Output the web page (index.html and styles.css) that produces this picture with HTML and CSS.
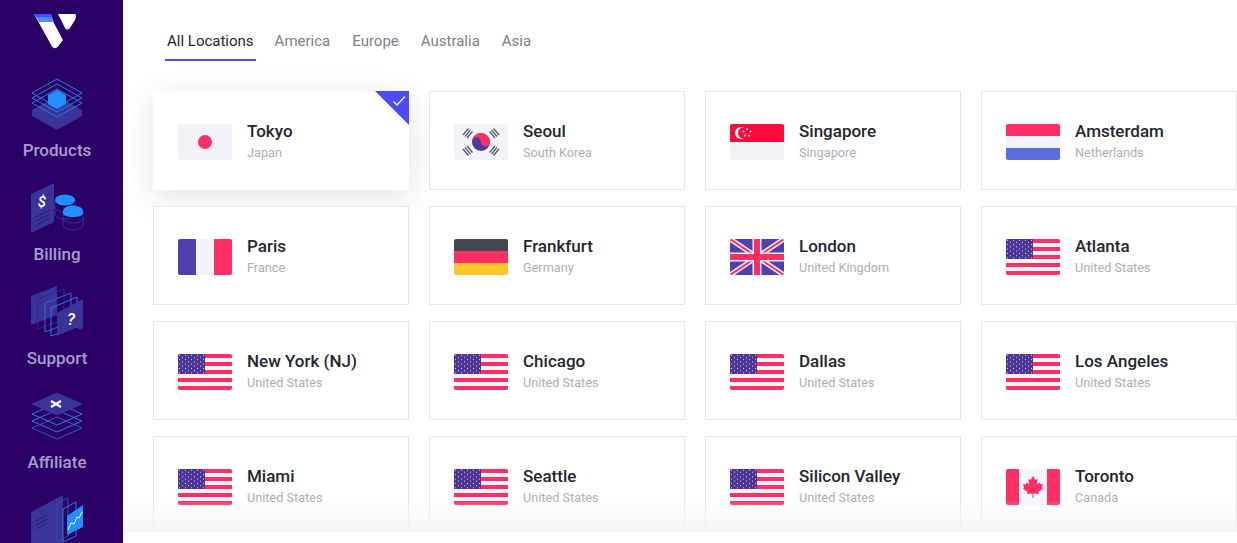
FILE: index.html
```html
<!DOCTYPE html>
<html lang="en">
<head>
<meta charset="utf-8">
<title>Locations</title>
<link rel="stylesheet" href="styles.css">
</head>
<body>
<svg class="defs" width="0" height="0" aria-hidden="true">
  <defs>
    <pattern id="stars" width="6" height="4.4" patternUnits="userSpaceOnUse">
      <circle cx="1.5" cy="1.2" r=".6" fill="#f2f3f8"/>
      <circle cx="4.5" cy="3.4" r=".6" fill="#f2f3f8"/>
    </pattern>
    <symbol id="us" viewBox="0 0 54 36">
      <rect width="54" height="36" fill="#f2f3f8"/>
      <path d="M0 0h54v4H0zM0 8h54v4H0zM0 16h54v4H0zM0 24h54v4H0zM0 32h54v4H0z" fill="#ff2e63"/>
      <rect width="27" height="20" fill="#4b3496"/>
      <rect width="27" height="20" fill="url(#stars)"/>
    </symbol>
  </defs>
</svg>
<div class="app">
  <nav class="sidebar">
    <svg class="logo" width="42" height="35" viewBox="0 0 42 35">
      <path d="M15 0H0L18 32.500Q21 36 24 32.500L29 26Z" fill="#fff"/>
      <path d="M0 0H17L20 8H5Z" fill="#4f8cff"/>
      <path d="M0 0H17L18 3H2Z" fill="#4a4aff"/>
      <path d="M24 0H41Q43 1 41 6L36 14Q33 17 31 14Z" fill="#fff"/>
    </svg>

    <a class="nav-item">
      <svg class="nav-icon" width="54" height="60" viewBox="0 0 54 60">
        <path d="M2 34L27 20L52 34V40L27 54L2 40Z" fill="#3a3399"/>
        <g fill="none" stroke="#2a7fdc" stroke-width="1" stroke-linejoin="round">
          <path d="M2 27L27 13L52 27L27 41Z"/>
          <path d="M2 22L27 8L52 22L27 36Z"/>
          <path d="M2 17L27 3L52 17L27 31Z"/>
        </g>
        <path d="M27 14L36 19V28L27 33L18 28V19Z" fill="#1e90ff"/>
      </svg>
      <span class="nav-label">Products</span>
    </a>

    <a class="nav-item">
      <svg class="nav-icon" width="54" height="60" viewBox="0 0 54 60">
        <path d="M1 14L24 3V42L1 53Z" fill="#3a3399"/>
        <text x="12" y="27" class="glyph">$</text>
        <path d="M6 37L20 30M6 41L20 34M6 45L20 38" stroke="#241a6e" stroke-width="1" fill="none"/>
        <g fill="none" stroke="#3a3399" stroke-width="1">
          <path d="M25 20V34C25 37 30 39 35 39S45 37 45 34V20"/>
          <path d="M25 27C25 30 30 32 35 32S45 30 45 27"/>
          <path d="M33 31V45C33 48 38 50 43 50S53 48 53 45V31"/>
          <path d="M33 38C33 41 38 43 43 43S53 41 53 38"/>
        </g>
        <ellipse cx="35" cy="20" rx="10" ry="5.500" fill="#1e90ff"/>
        <path d="M33 31A10 5.500 0 0 1 53 31V33C53 36 48 37 43 37S33 36 33 33Z" fill="#1e90ff"/>
      </svg>
      <span class="nav-label">Billing</span>
    </a>

    <a class="nav-item">
      <svg class="nav-icon" width="54" height="60" viewBox="0 0 54 60">
        <path d="M1 12L27 2V31L1 41Z" fill="#3a3399"/>
        <path d="M8 15L34 5V35L8 45Z" fill="none" stroke="#2c2b8f" stroke-width="1"/>
        <path d="M15 19L41 9V38L15 48Z" fill="none" stroke="#2a6fd0" stroke-width="1"/>
        <path d="M21 24L47 13V43L21 52Z" fill="none" stroke="#2a7fdc" stroke-width="1"/>
        <path d="M27 29L53 15V44L50 46L47 43L27 52Z" fill="#3a3399"/>
        <text x="41" y="41" class="glyph glyph-large">?</text>
      </svg>
      <span class="nav-label">Support</span>
    </a>

    <a class="nav-item">
      <svg class="nav-icon" width="54" height="60" viewBox="0 0 54 60">
        <g fill="none" stroke="#2a7fdc" stroke-width="1" stroke-linejoin="round">
          <path d="M2 40L27 29L52 40L27 51Z" stroke="#2560c0"/>
          <path d="M2 33L27 22L52 33L27 44Z"/>
          <path d="M2 26L27 15L52 26L27 37Z"/>
        </g>
        <path d="M2 16L27 5L52 16L27 27Z" fill="#3a3399" stroke="#3a3399" stroke-width="1" stroke-linejoin="round"/>
        <path d="M21 13L31 19M31 13L21 19" stroke="#fff" stroke-width="2.400" fill="none"/>
      </svg>
      <span class="nav-label">Affiliate</span>
    </a>

    <a class="nav-item">
      <svg class="nav-icon" width="54" height="60" viewBox="0 0 54 60">
        <path d="M1 20L33 3V60H1Z" fill="#3a3399"/>
        <path d="M6 29L17 23M6 33L17 27M6 37L17 31" stroke="#241a6e" stroke-width="1" fill="none"/>
        <path d="M27 12L38 6V44L27 50Z" fill="none" stroke="#2c4fb0" stroke-width="1"/>
        <path d="M33 17L46 10V44L33 50Z" fill="none" stroke="#2a7fdc" stroke-width="1"/>
        <path d="M37 24L53 13V35L37 43Z" fill="#1e90ff"/>
        <path d="M38 38L41 31L44 32L47 25L49 26L52 20" stroke="#fff" stroke-width="1" fill="none"/>
      </svg>
    </a>
  </nav>

  <main class="main">
    <ul class="tabs">
      <li class="tab tab-active">All Locations</li>
      <li class="tab">America</li>
      <li class="tab">Europe</li>
      <li class="tab">Australia</li>
      <li class="tab">Asia</li>
    </ul>

    <div class="grid">
      <div class="card card-active">
        <span class="corner">
          <svg width="14" height="12" viewBox="0 0 14 12"><path d="M1.500 6.500L5 10L13 1.500" fill="none" stroke="#fff" stroke-width="1.300"/></svg>
        </span>
        <svg class="flag" viewBox="0 0 54 36"><rect width="54" height="36" fill="#f2f3f8"/><circle cx="27" cy="18" r="7" fill="#ff2e63"/></svg>
        <div><div class="city">Tokyo</div><div class="country">Japan</div></div>
      </div>

      <div class="card">
        <svg class="flag" viewBox="0 0 54 36">
          <rect width="54" height="36" fill="#f2f3f8"/>
          <circle cx="27" cy="18" r="9" fill="#513a9e"/>
          <path d="M18 18A9 9 0 0 1 36 18A4.500 4.500 0 0 1 27 18A4.500 4.500 0 0 0 18 18Z" fill="#ff2e63"/>
          <g stroke="#55565e" stroke-width="1.200" fill="none">
            <path d="M9 11L14.500 4.500M11 12.500L16.500 6M13 14L18.500 7.500"/>
            <path d="M45 11L39.500 4.500M43 12.500L37.500 6M41 14L35.500 7.500"/>
            <path d="M9 25L14.500 31.500M11 23.500L16.500 30M13 22L18.500 28.500"/>
            <path d="M45 25L39.500 31.500M43 23.500L37.500 30M41 22L35.500 28.500"/>
          </g>
        </svg>
        <div><div class="city">Seoul</div><div class="country">South Korea</div></div>
      </div>

      <div class="card">
        <svg class="flag" viewBox="0 0 54 36">
          <rect width="54" height="36" fill="#f2f3f8"/>
          <rect width="54" height="18" fill="#ff0a3c"/>
          <circle cx="11" cy="9" r="6" fill="#fff"/>
          <circle cx="13.500" cy="9" r="5.500" fill="#ff0a3c"/>
          <g fill="#fff"><circle cx="17" cy="5" r="1"/><circle cx="13.500" cy="7.500" r="1"/><circle cx="20.500" cy="7.500" r="1"/><circle cx="15" cy="11.500" r="1"/><circle cx="19" cy="11.500" r="1"/></g>
        </svg>
        <div><div class="city">Singapore</div><div class="country">Singapore</div></div>
      </div>

      <div class="card">
        <svg class="flag" viewBox="0 0 54 36">
          <rect width="54" height="36" fill="#f2f3f8"/>
          <rect width="54" height="12" fill="#ff2e63"/>
          <rect y="24" width="54" height="12" fill="#5a6ee0"/>
        </svg>
        <div><div class="city">Amsterdam</div><div class="country">Netherlands</div></div>
      </div>

      <div class="card">
        <svg class="flag" viewBox="0 0 54 36">
          <rect width="54" height="36" fill="#f2f3f8"/>
          <rect width="18" height="36" fill="#513fae"/>
          <rect x="36" width="18" height="36" fill="#ff2e63"/>
        </svg>
        <div><div class="city">Paris</div><div class="country">France</div></div>
      </div>

      <div class="card">
        <svg class="flag" viewBox="0 0 54 36">
          <rect width="54" height="12" fill="#45474f"/>
          <rect y="12" width="54" height="12" fill="#ff2e63"/>
          <rect y="24" width="54" height="12" fill="#fcc62d"/>
        </svg>
        <div><div class="city">Frankfurt</div><div class="country">Germany</div></div>
      </div>

      <div class="card">
        <svg class="flag" viewBox="0 0 54 36">
          <rect width="54" height="36" fill="#513fae"/>
          <path d="M0 0L54 36M54 0L0 36" stroke="#f2f3f8" stroke-width="5"/>
          <path d="M0 0L54 36M54 0L0 36" stroke="#ff2e63" stroke-width="2"/>
          <path d="M27 0V36M0 18H54" stroke="#f2f3f8" stroke-width="9"/>
          <path d="M27 0V36M0 18H54" stroke="#ff2e63" stroke-width="6"/>
        </svg>
        <div><div class="city">London</div><div class="country">United Kingdom</div></div>
      </div>

      <div class="card">
        <svg class="flag"><use href="#us"/></svg>
        <div><div class="city">Atlanta</div><div class="country">United States</div></div>
      </div>

      <div class="card">
        <svg class="flag"><use href="#us"/></svg>
        <div><div class="city">New York (NJ)</div><div class="country">United States</div></div>
      </div>

      <div class="card">
        <svg class="flag"><use href="#us"/></svg>
        <div><div class="city">Chicago</div><div class="country">United States</div></div>
      </div>

      <div class="card">
        <svg class="flag"><use href="#us"/></svg>
        <div><div class="city">Dallas</div><div class="country">United States</div></div>
      </div>

      <div class="card">
        <svg class="flag"><use href="#us"/></svg>
        <div><div class="city">Los Angeles</div><div class="country">United States</div></div>
      </div>

      <div class="card">
        <svg class="flag"><use href="#us"/></svg>
        <div><div class="city">Miami</div><div class="country">United States</div></div>
      </div>

      <div class="card">
        <svg class="flag"><use href="#us"/></svg>
        <div><div class="city">Seattle</div><div class="country">United States</div></div>
      </div>

      <div class="card">
        <svg class="flag"><use href="#us"/></svg>
        <div><div class="city">Silicon Valley</div><div class="country">United States</div></div>
      </div>

      <div class="card">
        <svg class="flag" viewBox="0 0 54 36">
          <rect width="54" height="36" fill="#f5f6fb"/>
          <rect width="13" height="36" fill="#ff2e63"/>
          <rect x="41" width="13" height="36" fill="#ff2e63"/>
          <path d="M27 7L29.500 11L31.500 10L31 15.500L33.500 13.500L34.500 15.500L37 15L36 18.500L37 19.500L32.500 23L33 25L27.500 24.500V29H26.500V24.500L21 25L21.500 23L17 19.500L18 18.500L17 15L19.500 15.500L20.500 13.500L23 15.500L22.500 10L24.500 11Z" fill="#ff2e63"/>
        </svg>
        <div><div class="city">Toronto</div><div class="country">Canada</div></div>
      </div>
    </div>
    <div class="fade"></div>
  </main>
</div>
</body>
</html>
```

FILE: styles.css
```css
* {
  box-sizing: border-box;
}

html,
body {
  margin: 0;
  height: 100%;
  overflow: hidden;
  background: #fff;
  font-family: Roboto, "Liberation Sans", sans-serif;
}

.defs {
  display: block;
  height: 0;
}

.app {
  display: flex;
  height: 543px;
  align-items: flex-start;
}

.sidebar {
  flex: 0 0 123px;
  width: 123px;
  height: 543px;
  overflow: hidden;
  background: #2a0066;
  display: flex;
  flex-direction: column;
  align-items: center;
  padding: 14px 9px 0 0;
}

.logo {
  display: block;
  flex: none;
  margin-left: -4px;
  margin-bottom: 27px;
}

.nav-item {
  flex: none;
  display: flex;
  flex-direction: column;
  align-items: center;
  height: 104px;
}

.nav-icon {
  display: block;
  flex: none;
  margin-bottom: 4px;
}

.nav-label {
  font-size: 17px;
  line-height: 20px;
  font-weight: 500;
  color: #a99cce;
}

.glyph {
  font-family: Roboto, sans-serif;
  font-size: 15px;
  font-weight: 500;
  font-style: italic;
  fill: #fff;
  text-anchor: middle;
}

.glyph-large {
  font-size: 17px;
}

.main {
  position: relative;
  flex: 1 1 auto;
  height: 532px;
  overflow: hidden;
  padding: 22px 0 0 30px;
}

.tabs {
  list-style: none;
  margin: 0 0 30px 12px;
  padding: 0;
  display: flex;
  gap: 18px;
}

.tab {
  height: 39px;
  padding: 10px 2px 0;
  font-size: 15px;
  line-height: 18px;
  color: #7d7f88;
}

.tab-active {
  margin-right: -1px;
  color: #24262f;
  border-bottom: 2px solid #4a4aff;
}

.grid {
  display: grid;
  grid-template-columns: repeat(4, 256px);
  grid-auto-rows: 99px;
  column-gap: 20px;
  row-gap: 16px;
}

.card {
  position: relative;
  display: flex;
  align-items: center;
  gap: 15px;
  padding: 2px 24px 0;
  background: #fff;
  border: 1px solid #e5e5ea;
}

.card-active {
  border-color: #fff;
  box-shadow: 0 8px 30px rgba(30, 30, 60, 0.12);
}

.corner {
  position: absolute;
  top: -1px;
  right: -1px;
  width: 34px;
  height: 34px;
  background: #4a4aff;
  clip-path: polygon(0 0, 100% 0, 100% 100%);
}

.corner svg {
  position: absolute;
  top: 4px;
  right: 3px;
}

.flag {
  flex: none;
  display: block;
  width: 54px;
  height: 36px;
  border-radius: 2px;
}

.city {
  font-size: 17px;
  line-height: 20px;
  font-weight: 500;
  color: #24262f;
}

.country {
  margin-top: 3px;
  font-size: 12.700px;
  line-height: 18px;
  color: #acaeb7;
}

.fade {
  position: absolute;
  left: 0;
  right: 0;
  bottom: 0;
  height: 32px;
  background: linear-gradient(rgba(245, 245, 245, 0), #f5f5f5);
}
```
